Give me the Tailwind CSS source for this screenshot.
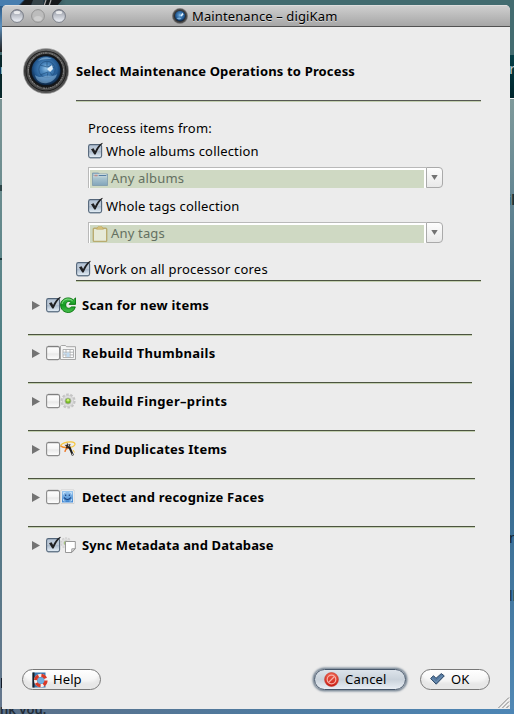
<!DOCTYPE html>
<html lang="en">
<head>
<meta charset="utf-8">
<title>Maintenance – digiKam</title>
<script src="https://cdn.jsdelivr.net/npm/@tailwindcss/browser@4"></script>
</head>
<body class="relative h-[714px] w-[514px] overflow-hidden bg-[#4f7fa8] font-['Noto_Sans','Open_Sans',sans-serif] text-[13px] text-black">

<!-- shared symbols -->
<svg class="absolute h-0 w-0">
  <defs>
    <linearGradient id="cbOn" x1="0" y1="0" x2="0" y2="1"><stop offset="0" stop-color="#b3c3d6"/><stop offset=".45" stop-color="#c0cbd8"/><stop offset=".5" stop-color="#aab9ca"/><stop offset="1" stop-color="#e6f0f8"/></linearGradient>
    <linearGradient id="cbOff" x1="0" y1="0" x2="0" y2="1"><stop offset="0" stop-color="#fff"/><stop offset=".5" stop-color="#f4f4f4"/><stop offset=".55" stop-color="#e9e9e9"/><stop offset="1" stop-color="#fff"/></linearGradient>
    <radialGradient id="lens" cx=".5" cy=".42" r=".58"><stop offset="0" stop-color="#8fc0e6"/><stop offset=".3" stop-color="#4a86bd"/><stop offset=".7" stop-color="#245a92"/><stop offset="1" stop-color="#0c2440"/></radialGradient>
    <linearGradient id="rim" x1="0" y1="0" x2="0" y2="1"><stop offset="0" stop-color="#6d6d6d"/><stop offset=".5" stop-color="#3d3d3d"/><stop offset="1" stop-color="#555"/></linearGradient>
    <linearGradient id="green" x1="0" y1="0" x2="0" y2="1"><stop offset="0" stop-color="#3fbd4a"/><stop offset=".5" stop-color="#129a20"/><stop offset="1" stop-color="#4cc04f"/></linearGradient>
    <linearGradient id="face" x1="0" y1="0" x2="0" y2="1"><stop offset="0" stop-color="#9cc8ef"/><stop offset="1" stop-color="#3b83cf"/></linearGradient>
    <linearGradient id="traffic" x1="0" y1="0" x2="0" y2="1"><stop offset="0" stop-color="#8f949f"/><stop offset=".35" stop-color="#b3b7c0"/><stop offset="1" stop-color="#f2f5fb"/></linearGradient>
    <linearGradient id="redball" x1="0" y1="0" x2="0" y2="1"><stop offset="0" stop-color="#f0604e"/><stop offset="1" stop-color="#c91d14"/></linearGradient>
    <linearGradient id="folder" x1="0" y1="0" x2="0" y2="1"><stop offset="0" stop-color="#8fb0c5"/><stop offset=".4" stop-color="#a9c4cf"/><stop offset="1" stop-color="#82a5bb"/></linearGradient>
    <symbol id="checked" viewBox="0 0 16 17">
      <rect x=".6" y="2.600" width="13" height="13" rx="1.800" fill="url(#cbOn)" stroke="#536579" stroke-width="1.100"/>
      <path d="M1.500 15.900h11" stroke="#8193a5" stroke-width=".8"/>
      <path d="M3 7.300 5.600 6.300 7.100 9C8.800 5.400 10.800 2.500 14.200.7L14.700 1.500C11.600 4.600 9.700 7.700 7.600 12.400H6.300Z" fill="#202022"/>
    </symbol>
    <symbol id="unchecked" viewBox="0 0 16 17">
      <rect x=".6" y="2.600" width="13" height="13" rx="1.800" fill="url(#cbOff)" stroke="#8a8a8a" stroke-width="1.100"/>
      <path d="M2 2.300h10.400" stroke="#777" stroke-width=".7"/>
    </symbol>
    <symbol id="camera" viewBox="0 0 46 46">
      <circle cx="23" cy="23" r="22.600" fill="url(#rim)" stroke="#a2a2a2" stroke-width=".7"/>
      <circle cx="23" cy="23" r="20.300" fill="#191919"/>
      <circle cx="23" cy="23" r="18.200" fill="none" stroke="#4a4a4a" stroke-width="2.600"/>
      <circle cx="23" cy="22.500" r="17.600" fill="none" stroke="#aaa" stroke-width="1.100" stroke-dasharray="1.200 .8 2 .9 .7 1" opacity=".6"/>
      <circle cx="23" cy="22.700" r="15.800" fill="#10151c"/>
      <circle cx="23" cy="22.700" r="14.400" fill="url(#lens)"/>
      <g fill="none" stroke="#1b4877" stroke-width="1" opacity=".6">
        <circle cx="24" cy="21.500" r="8.200"/>
        <path d="M17 17l7 2M24 13v6l6-2M31 19l-5 4 4 5M24 30l1-6-8 3"/>
      </g>
      <path d="M12 27c1 6 7 9 12 8 5-1 9-4 10-9-5 4-8 0-12 2-3 1-6 2-10-1Z" fill="#a4cff0" opacity=".45"/>
      <path d="M24 21l5-4 1 4-3 3Z" fill="#edf8ff" opacity=".9"/>
      <path d="M15 13c3-4 9-5 14-2-5 0-9 0-14 2Z" fill="#acd2ef" opacity=".5"/>
    </symbol>
    <symbol id="cameraSmall" viewBox="0 0 16 16">
      <circle cx="8" cy="8" r="7.600" fill="#4b4b4b" stroke="#7c7c7c" stroke-width=".6"/>
      <circle cx="8" cy="8" r="6.100" fill="#303134"/>
      <circle cx="8" cy="8" r="5.200" fill="url(#lens)"/>
      <path d="M8.500 7.500 10.500 4.800 11.500 6.500 9.500 8.500Z" fill="#e4f3ff"/>
      <path d="M4.500 10c1.500 1.800 3.500 2 5 .5l-2-1z" fill="#9accf2" opacity=".7"/>
    </symbol>
    <symbol id="cog" viewBox="0 0 16 16">
      <circle cx="8" cy="8" r="6.600" fill="none" stroke="#c4c4c4" stroke-width="2" stroke-dasharray="2.600 1.550"/>
      <circle cx="8" cy="8" r="5.600" fill="#dedede" stroke="#c0c0c0" stroke-width=".6"/>
      <circle cx="8" cy="8" r="3" fill="#76b72a" stroke="#aaa" stroke-width=".8"/>
      <circle cx="8" cy="7.200" r="1.400" fill="#c6f06c"/>
    </symbol>
  </defs>
</svg>

<!-- desktop behind the window -->
<div class="absolute inset-0 bg-[#436c70]"></div>
<div class="absolute top-[98px] left-0 h-[616px] w-[3px] bg-linear-to-b from-[#7c9596] via-[#437a80] via-[48%] to-[#66778e]"></div>
<div class="absolute top-[98px] right-0 h-[616px] w-[5px] bg-linear-to-b from-[#7f9a9b] via-[#2d5f80] via-[48%] to-[#5289b5]"></div>
<div class="absolute top-[55px] left-0 h-[43px] w-[3px] bg-[#08282b]"></div>
<div class="absolute top-[55px] right-0 h-[43px] w-[5px] bg-linear-to-b from-[#054047] to-[#00252c]"></div>
<div class="absolute top-[98px] left-0 h-px w-[514px] bg-[#f3f3f3]"></div>
<div class="absolute top-0 left-0 h-[52px] w-[3px] bg-linear-to-b from-[#1a4a78] via-[#5d91be] to-[#202020]"></div>
<div class="absolute top-0 left-0 h-[6px] w-[66px] bg-linear-to-r from-[#285a8c] via-[#172230] to-transparent"></div>
<svg class="absolute top-0 left-0 h-[8px] w-[70px]" viewBox="0 0 70 8"><path d="M25 0h8l-3 6H20zM45 0h17l-5 6H43z" fill="#16191b"/><path d="M33 0h10v6H31z" fill="#37454a"/><path d="M46 0l-2 6M51 0l-2 6" stroke="#aaa" stroke-width="1.200"/><path d="M0 0h24l-6 6H0z" fill="#477eaf"/></svg>
<div class="absolute top-[709px] left-0 h-[5px] w-[514px] bg-linear-to-r from-[#5b7088] via-[#4f7a9f] to-[#4d86b5]"></div>
<div class="absolute top-[701px] left-0 text-[13px] leading-[17px] font-semibold text-[#222c36]">nk you.</div>
<div class="absolute top-[60px] left-0 w-[2px] overflow-hidden text-[13px] text-[#ccc]">r</div>
<div class="absolute top-[58px] left-[509px] text-[15px] leading-[20px] text-[#c6cdd0]">r</div>
<div class="absolute top-[190px] left-[507px] text-[14px] leading-[20px] font-bold text-[#1b3137]">il</div>
<div class="absolute top-[528px] left-[509px] text-[14px] leading-[20px] text-[#102433]">n</div>
<div class="absolute top-[586px] left-[509px] text-[14px] leading-[20px] text-[#143149]">ll</div>
<div class="absolute top-[678px] left-px h-[10px] w-px bg-[#131b28]"></div>
<div class="absolute top-[185px] left-0 h-[6px] w-[2px] bg-[#2d4548]"></div>
<div class="absolute top-[258px] left-0 h-[2px] w-[2px] bg-[#1d3a3e]"></div>

<!-- window -->
<main class="relative mt-[5px] ml-[2px] flex h-[704px] w-[508px] flex-col overflow-hidden rounded-t-[5px] bg-[#ececec]">
  <header class="flex h-[22px] shrink-0 items-center border-t border-b border-t-[#dedede] border-b-[#515151] bg-linear-to-b from-[#cfcfcf] to-[#a6a6a6] pl-[8px]">
    <div class="flex gap-[7px]">
      <svg class="size-[14px]" viewBox="0 0 14 14"><circle cx="7" cy="7" r="6.400" fill="url(#traffic)" stroke="#6f747e" stroke-width=".9"/><ellipse cx="7" cy="3.400" rx="3.300" ry="1.700" fill="#fff" opacity=".75"/></svg>
      <svg class="size-[14px]" viewBox="0 0 14 14"><circle cx="7" cy="7" r="6.400" fill="#bcbcbc" stroke="#8e8e8e" stroke-width=".9"/><ellipse cx="7" cy="9.500" rx="4" ry="2.600" fill="#cecece"/></svg>
      <svg class="size-[14px]" viewBox="0 0 14 14"><circle cx="7" cy="7" r="6.400" fill="url(#traffic)" stroke="#6f747e" stroke-width=".9"/><ellipse cx="7" cy="3.400" rx="3.300" ry="1.700" fill="#fff" opacity=".75"/></svg>
    </div>
    <svg class="ml-[106px] size-[16px]"><use href="#cameraSmall"/></svg>
    <span class="ml-[4px] text-[13px] leading-[18px] tracking-[0.12px] whitespace-nowrap [text-shadow:0_1px_0_#d8d8d8]">Maintenance – digiKam</span>
  </header>

  <section class="flex h-[73px] shrink-0 pl-[21px]">
    <svg class="mt-[21px] size-[46px]"><use href="#camera"/></svg>
    <h1 class="mt-[35px] ml-[7px] text-[13px] leading-[18px] font-bold tracking-[0.16px] whitespace-nowrap">Select Maintenance Operations to Process</h1>
  </section>
  <div class="ml-[74px] h-[2px] w-[405px] shrink-0 border-b border-[#c3cfb0] bg-[#555852]"></div>

  <section class="flex h-[178px] shrink-0 flex-col pt-[17px] pl-[86px]">
    <p class="h-[18px] leading-[18px] tracking-[0.18px]">Process items from:</p>
    <label class="mt-[5px] flex h-[18px] leading-[18px]"><svg class="h-[17px] w-[16px]"><use href="#checked"/></svg><span class="ml-[2px] tracking-[0.17px]">Whole albums collection</span></label>
    <div class="mt-[7px] flex h-[21px] w-[355px] text-[#647061]">
      <div class="flex w-[338px] border-t border-l border-[#b9b9b9] bg-white pt-[2px] pr-[2px] pl-px">
        <div class="flex w-full items-start bg-[#cfd9c3] pl-[2px]">
          <svg class="mt-px size-[16px]" viewBox="0 0 16 16"><path d="M.5 2h6l1 1h8v11.500H.5z" fill="url(#folder)" stroke="#7594a9" stroke-width=".7"/><path d="M1.500 3.500h13M1 5.800h14" stroke="#d0dddd" stroke-width=".9"/><path d="M2.500 4.500h3" stroke="#c28d88" stroke-width="1.300"/><path d="M7 4.500h7" stroke="#567ea4"/></svg>
          <span class="ml-[3px] leading-[17px] tracking-[0.17px]">Any albums</span>
        </div>
      </div>
      <div class="flex w-[17px] justify-center rounded-r-[4px] border border-[#aaa] bg-linear-to-b from-[#fdfdfd] to-[#e9e9e9] pt-[7px]"><svg class="h-[5px] w-[7px]" viewBox="0 0 7 5"><path d="M.3 0h6.400L3.500 5z" fill="#737373"/></svg></div>
    </div>
    <label class="mt-[9px] flex h-[18px] leading-[18px]"><svg class="h-[17px] w-[16px]"><use href="#checked"/></svg><span class="ml-[2px] tracking-[0.17px]">Whole tags collection</span></label>
    <div class="mt-[7px] flex h-[21px] w-[355px] text-[#647061]">
      <div class="flex w-[338px] border-t border-l border-[#b9b9b9] bg-white pt-[2px] pr-[2px] pl-px">
        <div class="flex w-full items-start bg-[#cfd9c3] pl-[2px]">
          <svg class="mt-px size-[16px]" viewBox="0 0 16 16"><rect x="1.300" y="2.200" width="13.400" height="13.200" rx="1" fill="#e6ead8" stroke="#b9ac70" stroke-width="1.400"/><path d="M4.500 3.200 6 .7h4l1.500 2.500z" fill="#d8c681" stroke="#c2a75f" stroke-width=".7"/></svg>
          <span class="ml-[3px] leading-[17px] tracking-[0.17px]">Any tags</span>
        </div>
      </div>
      <div class="flex w-[17px] justify-center rounded-r-[4px] border border-[#aaa] bg-linear-to-b from-[#fdfdfd] to-[#e9e9e9] pt-[7px]"><svg class="h-[5px] w-[7px]" viewBox="0 0 7 5"><path d="M.3 0h6.400L3.500 5z" fill="#737373"/></svg></div>
    </div>
    <label class="mt-[17px] -ml-[12px] flex h-[18px] leading-[18px]"><svg class="h-[17px] w-[16px]"><use href="#checked"/></svg><span class="ml-[2px] tracking-[0.2px]">Work on all processor cores</span></label>
  </section>
  <div class="ml-[74px] h-[2px] w-[405px] shrink-0 border-b border-[#c3cfb0] bg-[#4c5440]"></div>

  <!-- operations -->
  <section class="flex shrink-0 flex-col pl-[26px] font-bold">
    <div class="flex h-[52px] pt-[14px] pl-[4px]">
      <svg class="mt-[5px] h-[9px] w-[8px]" viewBox="0 0 8 9"><path d="M0 0 8 4.500 0 9z" fill="#737373"/></svg>
      <svg class="ml-[6px] h-[17px] w-[16px]"><use href="#checked"/></svg>
      <svg class="mt-px -ml-[2px] size-[16px]" viewBox="0 0 16 16"><path d="M15.500.9V7.400H9L11 5.300C8.600 3.400 5.700 5 5.700 8s3.300 4.500 5.600 1.900h4C14.500 13.500 11.600 15.500 8.200 15.500 4 15.500.6 12.300.6 8 .6 1.800 8.500-1.500 13.400 2.900z" fill="url(#green)" stroke="#08750e" stroke-width=".9"/><path d="M2 7C2.500 2.500 8.500.5 12.500 3.600" stroke="#91df8d" fill="none" stroke-width=".9"/></svg>
      <span class="ml-[6px] leading-[18px] tracking-[0.24px]">Scan for new items</span>
    </div>
    <div class="h-[2px] w-[444px] border-b border-[#c3cfb0] bg-[#4c5440]"></div>
    <div class="flex h-[46px] pt-[8px] pl-[4px]">
      <svg class="mt-[5px] h-[9px] w-[8px]" viewBox="0 0 8 9"><path d="M0 0 8 4.500 0 9z" fill="#737373"/></svg>
      <svg class="ml-[6px] h-[17px] w-[16px]"><use href="#unchecked"/></svg>
      <svg class="mt-px -ml-[2px] size-[16px]" viewBox="0 0 16 16"><path d="M.5 14.500V1.200l1-.7h4l1 1.200h9v12.800z" fill="#f5f5f5" stroke="#9d9d9d" stroke-width=".9"/><path d="M3 4.500h10.500v8H3zM6 4.500v8M10 4.500v8M3 7.200h10.500M3 9.900h10.500" stroke="#aaabad" fill="#fff" stroke-width=".9"/><path d="M6.500 7.600h3v4.400h-3zM3.500 7.600h2v2h-2z" fill="#c0daf0"/></svg>
      <span class="ml-[6px] leading-[18px] tracking-[0.3px]">Rebuild Thumbnails</span>
    </div>
    <div class="h-[2px] w-[444px] border-b border-[#c3cfb0] bg-[#4c5440]"></div>
    <div class="flex h-[46px] pt-[8px] pl-[4px]">
      <svg class="mt-[5px] h-[9px] w-[8px]" viewBox="0 0 8 9"><path d="M0 0 8 4.500 0 9z" fill="#737373"/></svg>
      <svg class="ml-[6px] h-[17px] w-[16px]"><use href="#unchecked"/></svg>
      <svg class="mt-px -ml-[2px] size-[16px]"><use href="#cog"/></svg>
      <span class="ml-[6px] leading-[18px] tracking-[0.32px]">Rebuild Finger–prints</span>
    </div>
    <div class="h-[2px] w-[447px] border-b border-[#c3cfb0] bg-[#4c5440]"></div>
    <div class="flex h-[46px] pt-[8px] pl-[4px]">
      <svg class="mt-[5px] h-[9px] w-[8px]" viewBox="0 0 8 9"><path d="M0 0 8 4.500 0 9z" fill="#737373"/></svg>
      <svg class="ml-[6px] h-[17px] w-[16px]"><use href="#unchecked"/></svg>
      <svg class="mt-px -ml-[2px] size-[16px]" viewBox="0 0 16 16"><path d="M.4 4.600C2 2.500 6 1 10.500.9 14 .8 15.500 2 14.800 3.800 14 5.600 11 6.400 8 6.500" fill="none" stroke="#f7c53a" stroke-width="1.200"/><path d="M.4 4.800C3 6.500 6.500 7 10 6" fill="none" stroke="#f08a22" stroke-width="1.400"/><path d="M5 11C5 9 6.500 7.500 8.500 7" fill="none" stroke="#ef7623" stroke-width="1.300"/><path d="M13 9l1.500 2.500" stroke="#f7c53a" stroke-width="1"/><path d="M7 1.500l1.200 2.300 2.500-.5L9.400 5.800l.8 2.600-2.500-1.400L5.500 7.800l.8-2.200L4.500 3.700l2.200.2z" fill="#3b2a22"/><path d="M8.300 3.500 13 14.500" stroke="#1b1b1b" stroke-width="2"/><path d="M8.300 3.500l.8 2M12.200 12.500l.9 2.200" stroke="#d8d8d8" stroke-width="1"/></svg>
      <span class="ml-[6px] leading-[18px] tracking-[0.22px]">Find Duplicates Items</span>
    </div>
    <div class="h-[2px] w-[447px] border-b border-[#c3cfb0] bg-[#4c5440]"></div>
    <div class="flex h-[46px] pt-[8px] pl-[4px]">
      <svg class="mt-[5px] h-[9px] w-[8px]" viewBox="0 0 8 9"><path d="M0 0 8 4.500 0 9z" fill="#737373"/></svg>
      <svg class="ml-[6px] h-[17px] w-[16px]"><use href="#unchecked"/></svg>
      <svg class="mt-px -ml-[2px] size-[16px]" viewBox="0 0 16 16"><path d="M1 1h13v13.500H1z" fill="#fff" stroke="#c5c5c5" stroke-width=".7"/><path d="M2 2h11v11.500H2z" fill="url(#face)"/><path d="M3.500 5.500v-2h2M9.500 3.500h2v2M3.500 10v2h2M11.500 10v2h-2" stroke="#d8ebfc" fill="none" stroke-width=".7"/><path d="M5.700 5.500v1.600M9.300 5.500v1.600M4.200 8.500c1.500 2.600 5 2.600 6.600 0" stroke="#183f7c" fill="none" stroke-width="1.100"/></svg>
      <span class="ml-[6px] leading-[18px] tracking-[0.22px]">Detect and recognize Faces</span>
    </div>
    <div class="h-[2px] w-[447px] border-b border-[#c3cfb0] bg-[#4c5440]"></div>
    <div class="flex h-[46px] pt-[8px] pl-[4px]">
      <svg class="mt-[5px] h-[9px] w-[8px]" viewBox="0 0 8 9"><path d="M0 0 8 4.500 0 9z" fill="#737373"/></svg>
      <svg class="ml-[6px] h-[17px] w-[16px]"><use href="#checked"/></svg>
      <svg class="mt-px -ml-[2px] size-[16px]" viewBox="0 0 16 16"><use href="#cog" x="0" y="0" width="12" height="12" opacity=".65"/><path d="M5.500 4.500h9.800v7.200l-3.500 3.800H5.500z" fill="#fff" stroke="#8d8d8d" stroke-width=".9"/><path d="M11.500 15.300l.3-3.500 3.400-.2z" fill="#ddd" stroke="#888" stroke-width=".7"/></svg>
      <span class="ml-[6px] leading-[18px] tracking-[0.13px]">Sync Metadata and Database</span>
    </div>
  </section>

  <footer class="mt-auto flex h-[43px] shrink-0 items-start pl-[20px]">
    <button class="mt-[3px] flex h-[21px] w-[79px] items-center rounded-full border border-[#777] bg-linear-to-b from-white via-[#f6f6f6] via-50% to-[#f6f6f6] pl-[9px] shadow-[inset_0_-7px_3px_#e7e7e7]">
      <svg class="size-[16px]" viewBox="0 0 16 16"><path d="M.5.5h13v15H.5z" fill="#3b78b0"/><path d="M.5.5h2v15h-2z" fill="#191e25"/><circle cx="8.800" cy="8.500" r="5.200" fill="none" stroke="#f5eeee" stroke-width="3.200"/><circle cx="8.800" cy="8.500" r="5.200" fill="none" stroke="#d83a28" stroke-width="3.200" stroke-dasharray="5.100 3.070"/><circle cx="8.800" cy="8.500" r="3.200" fill="#73b0e2"/></svg>
      <span class="-mt-px ml-[5px] leading-[18px] tracking-[0.1px]">Help</span>
    </button>
    <button class="mt-[3px] ml-[213px] flex h-[21px] w-[92px] items-center rounded-full border border-[#46566a] bg-linear-to-b from-[#dce3ea] via-[#c9d2db] via-50% to-[#e9eef4] pl-[9px] shadow-[0_0_2px_1.5px_#7b8997]">
      <svg class="size-[15px]" viewBox="0 0 15 15"><circle cx="7.500" cy="7.500" r="6.900" fill="url(#redball)" stroke="#bd3025" stroke-width=".6"/><circle cx="7.500" cy="7.500" r="4.300" fill="none" stroke="#f7b0a6" stroke-width="1.200"/><path d="M4.500 10.500l6-6" stroke="#f7b0a6" stroke-width="1.300"/></svg>
      <span class="-mt-px ml-[6px] leading-[18px] tracking-[0.2px]">Cancel</span>
    </button>
    <button class="mt-[3px] ml-[14px] flex h-[21px] w-[70px] items-center rounded-full border border-[#777] bg-linear-to-b from-white via-[#f6f6f6] via-50% to-[#f6f6f6] pl-[9px] shadow-[inset_0_-7px_3px_#e7e7e7]">
      <svg class="-mt-px h-[12px] w-[15px]" viewBox="0 0 15 12"><path d="M.6 5.500 3.500 2.700 6 5.300 11.300.6l3 2.300L6.200 11.200z" fill="#567ba2" stroke="#2e4967"/><path d="M2 5.300l4 4 6.500-6.500" stroke="#819fba" fill="none" stroke-width=".7"/></svg>
      <span class="-mt-px ml-[6px] leading-[18px]">OK</span>
    </button>
  </footer>
  <svg class="absolute right-0 bottom-0 size-[13px]" viewBox="0 0 13 13"><path d="M1.500 12 12 1.500M5.500 12 12 5.500M9.500 12 12 9.500" stroke="#777" stroke-width="1"/><path d="M2.700 12 12 2.700M6.700 12 12 6.700" stroke="#fff" stroke-width=".6"/></svg>
</main>
</body>
</html>
